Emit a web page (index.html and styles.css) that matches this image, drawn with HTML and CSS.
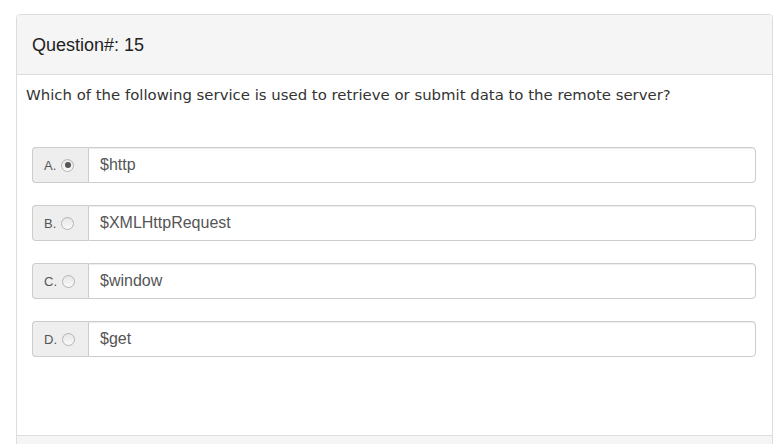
FILE: index.html
```html
<!DOCTYPE html>
<html lang="en">
<head>
<meta charset="utf-8">
<title>Question 15</title>
<link rel="stylesheet" href="styles.css">
</head>
<body>
<div class="panel">
  <div class="panel-heading">Question#: 15</div>
  <div class="panel-body">
    <p class="question">Which of the following service is used to retrieve or submit data to the remote server?</p>
    <div class="options">
      <label class="option">
        <span class="addon">A.<input type="radio" name="q15" class="radio" checked></span>
        <span class="answer">$http</span>
      </label>
      <label class="option">
        <span class="addon">B.<input type="radio" name="q15" class="radio"></span>
        <span class="answer">$XMLHttpRequest</span>
      </label>
      <label class="option">
        <span class="addon">C.<input type="radio" name="q15" class="radio"></span>
        <span class="answer">$window</span>
      </label>
      <label class="option">
        <span class="addon">D.<input type="radio" name="q15" class="radio"></span>
        <span class="answer">$get</span>
      </label>
    </div>
  </div>
  <div class="panel-footer"></div>
</div>
</body>
</html>
```

FILE: styles.css
```css
html, body {
  margin: 0;
  padding: 0;
  overflow: hidden;
  background: #fff;
}

body {
  padding: 14px 0 0 16px;
  font-family: "Liberation Sans", Arial, sans-serif;
  color: #333;
}

.panel {
  width: 757px;
  box-sizing: border-box;
  border: 1px solid #ddd;
  border-radius: 4px;
  background: #fff;
}

.panel-heading {
  background: #f5f5f5;
  border-bottom: 1px solid #ddd;
  border-radius: 3px 3px 0 0;
  height: 60px;
  box-sizing: border-box;
  display: flex;
  align-items: center;
  padding: 1px 15px 0;
  font-size: 18px;
  color: #222;
}

.panel-body {
  padding: 10px 16px 78px 9px;
}

.question {
  margin: 0 0 42px;
  font-family: "DejaVu Sans", Verdana, sans-serif;
  font-size: 14.9px;
  line-height: 20px;
  color: #333;
}

.options {
  display: flex;
  flex-direction: column;
  gap: 22px;
  padding-left: 6px;
}

.option {
  display: flex;
  height: 36px;
  box-sizing: border-box;
}

.addon {
  width: 56px;
  box-sizing: border-box;
  display: flex;
  align-items: center;
  padding-left: 11px;
  background: #eee;
  border: 1px solid #ccc;
  border-right: 0;
  border-radius: 4px 0 0 4px;
  font-size: 13px;
  color: #555;
}

.radio {
  appearance: none;
  -webkit-appearance: none;
  width: 13px;
  height: 13px;
  margin: 0 0 0 5px;
  border-radius: 50%;
  border: 1px solid #b4b4b4;
  background: linear-gradient(#e6e6e6, #fafafa);
  box-sizing: border-box;
  position: relative;
}

.radio:checked::after {
  content: "";
  position: absolute;
  left: 2.5px;
  top: 2.5px;
  width: 6px;
  height: 6px;
  border-radius: 50%;
  background: #555;
}

.answer {
  flex: 1;
  display: flex;
  align-items: center;
  padding-left: 11px;
  border: 1px solid #ccc;
  border-radius: 0 4px 4px 0;
  box-shadow: inset 0 1px 1px rgba(0, 0, 0, 0.075);
  font-size: 16px;
  color: #555;
}

.panel-footer {
  height: 40px;
  background: #f5f5f5;
  border-top: 1px solid #ddd;
}
```
